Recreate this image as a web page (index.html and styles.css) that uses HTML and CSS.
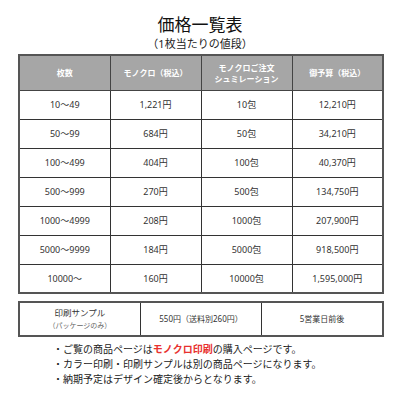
FILE: index.html
```html
<!DOCTYPE html>
<html lang="ja">
<head>
<meta charset="utf-8">
<link rel="stylesheet" href="styles.css">
</head>
<body>
<div class="page">
  <h1 class="title">価格一覧表</h1>
  <p class="subtitle">（1枚当たりの値段）</p>
  <table class="price">
    <thead>
      <tr>
        <th>枚数</th>
        <th>モノクロ（税込）</th>
        <th>モノクロご注文<br>シュミレーション</th>
        <th>御予算（税込）</th>
      </tr>
    </thead>
    <tbody>
      <tr><td>10～49</td><td>1,221円</td><td>10包</td><td>12,210円</td></tr>
      <tr><td>50～99</td><td>684円</td><td>50包</td><td>34,210円</td></tr>
      <tr><td>100～499</td><td>404円</td><td>100包</td><td>40,370円</td></tr>
      <tr><td>500～999</td><td>270円</td><td>500包</td><td>134,750円</td></tr>
      <tr><td>1000～4999</td><td>208円</td><td>1000包</td><td>207,900円</td></tr>
      <tr><td>5000～9999</td><td>184円</td><td>5000包</td><td>918,500円</td></tr>
      <tr><td>10000～</td><td>160円</td><td>10000包</td><td>1,595,000円</td></tr>
    </tbody>
  </table>
  <table class="sample">
    <tr>
      <td><span class="s-main">印刷サンプル</span><br><span class="s-sub">（パッケージのみ）</span></td>
      <td>550円（送料別260円）</td>
      <td>5営業日前後</td>
    </tr>
  </table>
  <ul class="notes">
    <li>・ご覧の商品ページは<strong class="red">モノクロ印刷</strong>の購入ページです。</li>
    <li>・カラー印刷・印刷サンプルは別の商品ページになります。</li>
    <li>・納期予定はデザイン確定後からとなります。</li>
  </ul>
</div>
</body>
</html>
```

FILE: styles.css
```css
* { box-sizing: border-box; }
html, body { margin: 0; padding: 0; background: #fff; }
body {
  font-family: "Noto Sans", "Noto Sans CJK JP", sans-serif;
  color: #333;
  width: 400px;
  height: 400px;
  overflow: hidden;
}
.page { padding-top: 14px; }
.title {
  margin: 0;
  font-family: "Noto Sans CJK JP", sans-serif;
  font-size: 17px;
  line-height: 20px;
  font-weight: normal;
  text-align: center;
  color: #111;
}
.subtitle {
  margin: 3px 0 0;
  font-size: 11px;
  line-height: 14px;
  text-align: center;
  color: #222;
}
.price {
  margin: 3px 0 0 18px;
  width: 366px;
  border-collapse: collapse;
  table-layout: fixed;
  border: 2px solid #555;
}
.price th {
  background: #a6a6a6;
  color: #fff;
  font-size: 8px;
  line-height: 11px;
  font-weight: bold;
  height: 35px;
  border: 1px solid #444;
  padding: 0;
}
.price td {
  height: 29px;
  font-size: 9px;
  text-align: center;
  border: 1px solid #333;
  padding: 0;
  color: #333;
}
.sample {
  margin: 7px 0 0 18px;
  width: 366px;
  border-collapse: collapse;
  table-layout: fixed;
  border: 2px solid #555;
}
.sample td {
  height: 34px;
  border: 1px solid #333;
  text-align: center;
  font-size: 8px;
  line-height: 12px;
  padding: 0;
  color: #333;
}
.s-main { font-size: 8.5px; }
.s-sub { font-size: 7px; color: #666; }
.notes {
  list-style: none;
  margin: 5px 0 0 53px;
  padding: 0;
  font-size: 10px;
  line-height: 15px;
  color: #222;
}
.red { color: #e8312f; font-weight: bold; }
```
